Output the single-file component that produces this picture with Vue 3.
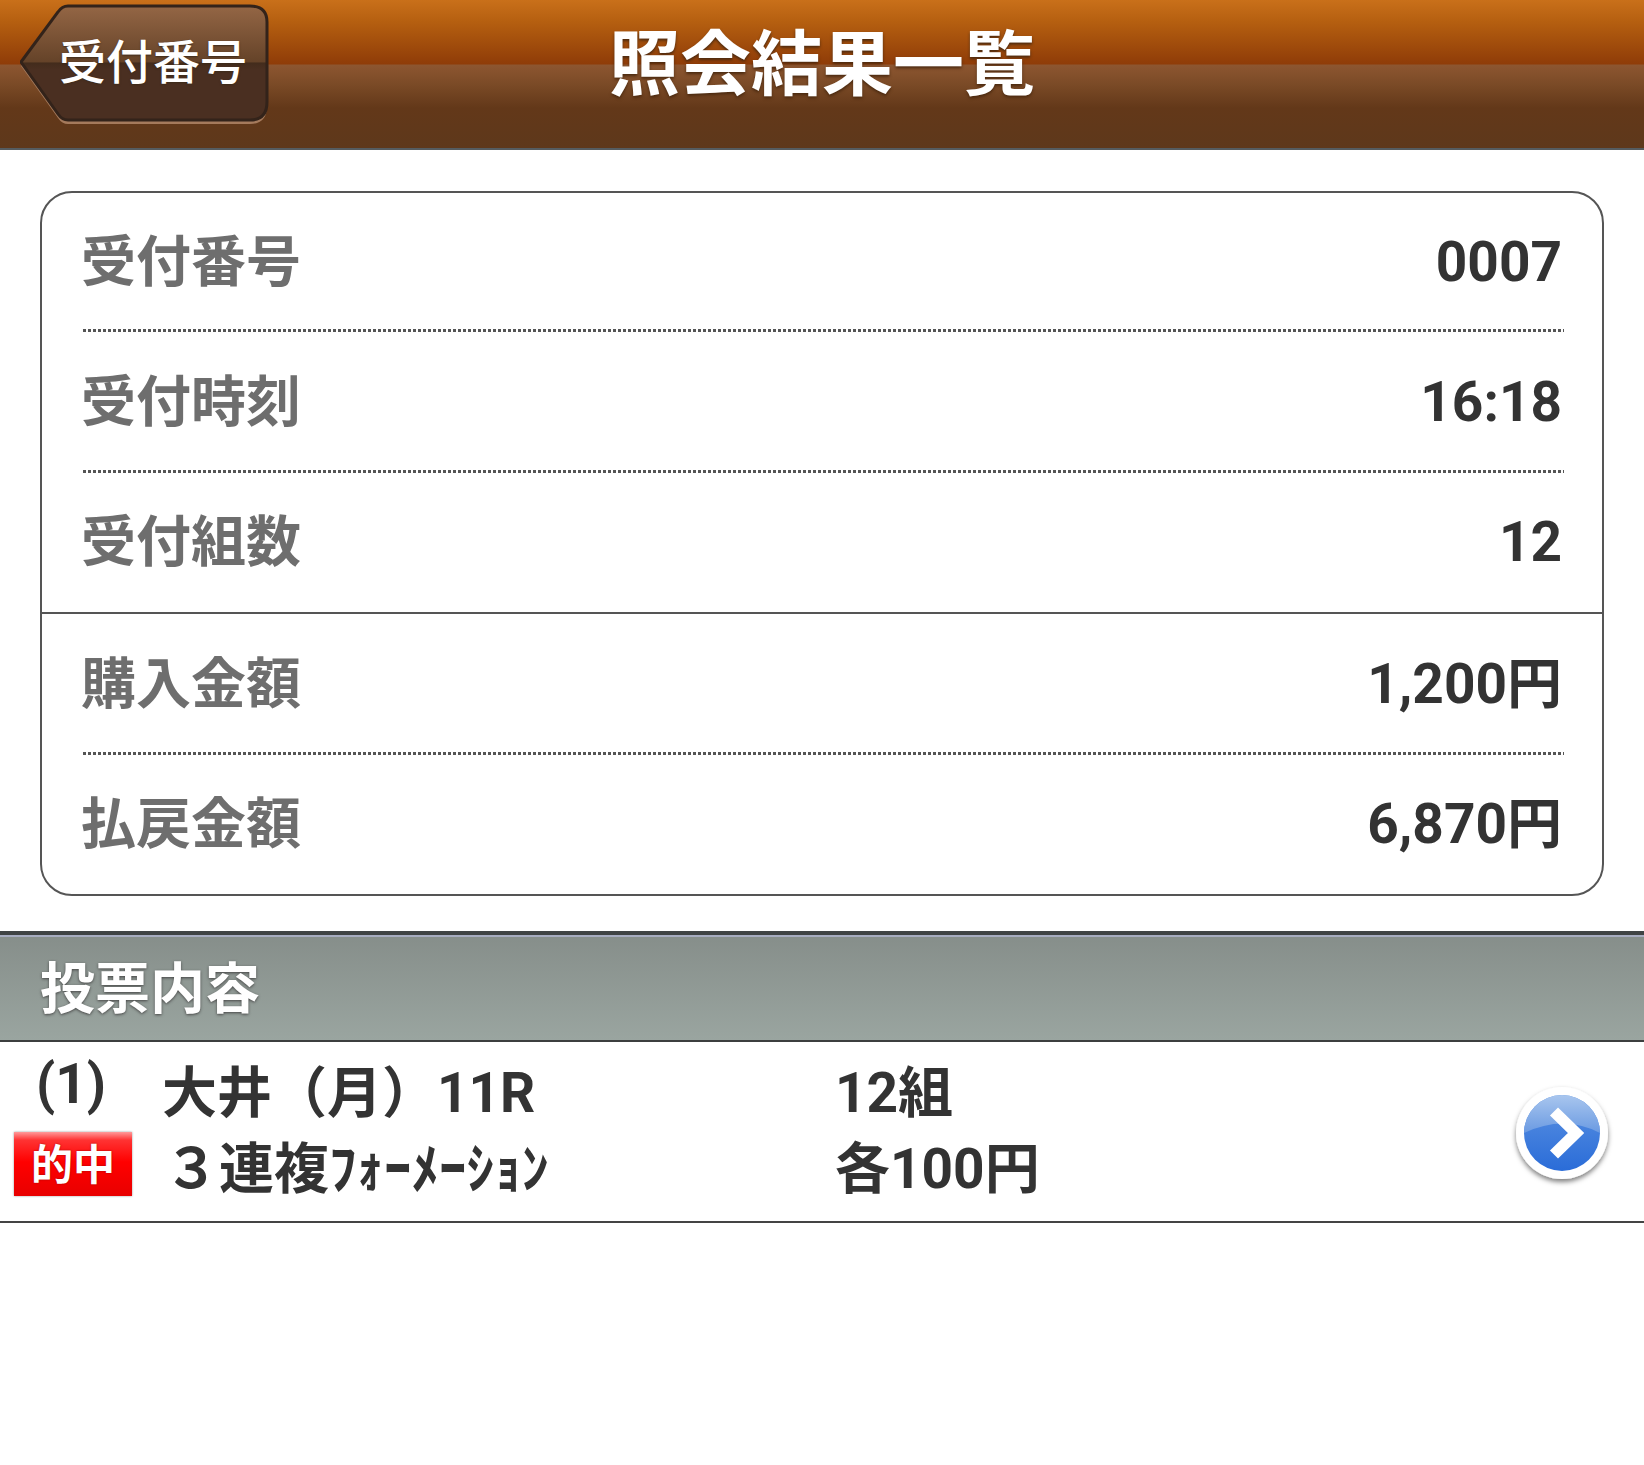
<template>
  <div class="page">
    <header class="topbar">
      <button type="button" class="back-button">
        <svg class="back-shape" viewBox="0 0 250 120" preserveAspectRatio="none">
          <defs>
            <linearGradient id="backFill" x1="0" y1="0" x2="0" y2="1">
              <stop offset="0" stop-color="#946645" />
              <stop offset="0.49" stop-color="#654329" />
              <stop offset="0.5" stop-color="#432c1c" />
              <stop offset="0.56" stop-color="#4a2f21" />
              <stop offset="1" stop-color="#4a2f21" />
            </linearGradient>
          </defs>
          <path d="M48 4 H230 Q247 4 247 20 V100 Q247 118 230 118 H48 Q42 118 38 112 L1 60 L38 10 Q42 4 48 4 Z" fill="#a57a5c" transform="translate(0 2)" />
          <path d="M48 2 H230 Q247 2 247 18 V98 Q247 116 230 116 H48 Q42 116 38 110 L1 58 L38 8 Q42 2 48 2 Z" fill="url(#backFill)" stroke="#33231a" stroke-width="3" />
        </svg>
        <span class="back-label">受付番号</span>
      </button>
      <h1 class="topbar-title">照会結果一覧</h1>
    </header>

    <section class="summary-card">
      <div
        v-for="row in summaryRows"
        :key="row.label"
        class="summary-row"
        :class="{ 'is-last-of-group': row.groupEnd }"
      >
        <span class="summary-label">{{ row.label }}</span>
        <span class="summary-value">{{ row.value }}</span>
      </div>
    </section>

    <h2 class="section-title">投票内容</h2>

    <div class="vote-row">
      <span class="vote-index">(1)</span>
      <span class="vote-race">大井（月）11R</span>
      <span class="vote-count">12組</span>
      <span class="hit-badge">的中</span>
      <span class="vote-type">３連複ﾌｫｰﾒｰｼｮﾝ</span>
      <span class="vote-amount">各100円</span>
      <svg class="detail-icon" viewBox="0 0 96 96">
        <defs>
          <linearGradient id="iconBase" x1="0" y1="0" x2="0" y2="1">
            <stop offset="0" stop-color="#5c92e2" />
            <stop offset="1" stop-color="#2a6cd8" />
          </linearGradient>
          <linearGradient id="iconGloss" x1="0" y1="0" x2="0" y2="1">
            <stop offset="0" stop-color="#a9c6ee" />
            <stop offset="1" stop-color="#6a9ae2" />
          </linearGradient>
          <filter id="iconShadow" x="-20%" y="-20%" width="140%" height="140%">
            <feDropShadow dx="0" dy="3" stdDeviation="2.5" flood-color="#000" flood-opacity="0.5" />
          </filter>
        </defs>
        <circle cx="48" cy="48" r="46" fill="#fff" filter="url(#iconShadow)" />
        <circle cx="48" cy="48" r="38" fill="url(#iconBase)" />
        <path d="M10 48 A38 38 0 0 1 86 48 Q50 29 10 48 Z" fill="url(#iconGloss)" />
        <polyline points="40,26.5 62,48 40,69.5" fill="none" stroke="#fff" stroke-width="11.5" />
      </svg>
    </div>
  </div>
</template>

<script setup>
const summaryRows = [
  { label: '受付番号', value: '0007' },
  { label: '受付時刻', value: '16:18' },
  { label: '受付組数', value: '12', groupEnd: true },
  { label: '購入金額', value: '1,200円' },
  { label: '払戻金額', value: '6,870円' }
]
</script>

<style>
body {
  background: #fff;
}
</style>

<style scoped>
.page {
  min-height: 1465px;
  background: #fff;
  font-family: Roboto, "Noto Sans CJK JP", sans-serif;
  color: #2b2b2b;
}

.topbar {
  display: grid;
  grid-template-columns: 1fr auto 1fr;
  align-items: center;
  height: 150px;
  padding: 0 20px 20px;
  box-sizing: border-box;
  border-bottom: 2px solid #555c60;
  background: linear-gradient(
    #c9701a 0,
    #b55f10 22px,
    #8f3c08 64px,
    #8d5630 65px,
    #7a4a26 85px,
    #633819 108px,
    #5e381b 148px
  );
}

.back-button {
  position: relative;
  width: 250px;
  height: 120px;
  margin-top: -1px;
  padding: 0 0 10px 39px;
  border: 0;
  background: none;
  text-align: left;
  font-family: inherit;
}

.back-shape {
  position: absolute;
  top: 0;
  left: 0;
  width: 100%;
  height: 100%;
}

.back-label {
  position: relative;
  font-size: 47px;
  font-weight: 500;
  color: #fff;
  text-shadow: 0 1px 2px #3c2a1a;
}

.topbar-title {
  margin: 0;
  font-size: 71px;
  font-weight: 700;
  line-height: 1;
  color: #fff;
  text-shadow: 0 2px 3px #4b2a10;
}

.summary-card {
  margin: 41px 40px 0;
  padding: 0 38px 0 41px;
  border: 2px solid #555;
  border-radius: 32px;
}

.summary-row {
  display: flex;
  justify-content: space-between;
  align-items: center;
  height: 141px;
  padding: 0 2px 1px 0;
  box-sizing: border-box;
  font-size: 55px;
  font-weight: 700;
  line-height: 1;
  background: repeating-linear-gradient(90deg, #555 0 3px, transparent 3px 5px) left bottom / 100% 3px no-repeat;
}

.summary-row:first-child {
  height: 139px;
}

.summary-row:last-child {
  height: 139px;
  background: none;
}

.summary-row.is-last-of-group {
  margin: 0 -38px 0 -41px;
  padding: 0 40px 1px 41px;
  background: none;
  border-bottom: 2px solid #555;
}

.summary-label {
  margin-left: -2px;
  color: #6e6e6e;
}

.summary-value {
  color: #333;
}

.section-title {
  margin: 35px 0 0;
  height: 111px;
  padding-left: 40px;
  box-sizing: border-box;
  border-top: 4px solid #3f4344;
  border-bottom: 2px solid #3c3f3f;
  box-shadow: inset 0 2px 0 #a6acc0;
  background: linear-gradient(#868e8a, #9aa5a0);
  font-size: 55px;
  font-weight: 700;
  line-height: 108px;
  color: #fff;
  text-shadow: 0 1px 3px #444;
}

.vote-row {
  display: grid;
  grid-template-columns: 148px 673px 1fr 112px;
  grid-template-rows: 88px 68px;
  align-items: center;
  height: 181px;
  padding: 5px 34px 0 14px;
  box-sizing: border-box;
  border-bottom: 2px solid #444;
  font-size: 55px;
  font-weight: 700;
  line-height: 1;
  color: #333;
}

.vote-index {
  padding-left: 22px;
  margin-bottom: 14px;
}

.vote-race {
  grid-column: 2;
  grid-row: 1;
  margin-top: 4px;
}

.vote-count {
  grid-column: 3;
  grid-row: 1;
  margin-top: 4px;
}

.hit-badge {
  grid-column: 1;
  grid-row: 2;
  width: 118px;
  height: 64px;
  margin-bottom: 10px;
  font-size: 42px;
  font-weight: 700;
  line-height: 68px;
  text-align: center;
  color: #fff;
  text-shadow: 0 0 2px #900;
  background: linear-gradient(#ff9a9a 0, #f33 8px, #f00 30px, #e80000 100%);
  box-shadow: 0 0 2px #999;
}

.vote-type {
  grid-column: 2;
  grid-row: 2;
  padding-left: 2px;
}

.vote-amount {
  grid-column: 3;
  grid-row: 2;
}

.detail-icon {
  grid-column: 4;
  grid-row: 1 / 3;
  justify-self: end;
  width: 96px;
  height: 96px;
  margin-top: 16px;
  overflow: visible;
}
</style>
